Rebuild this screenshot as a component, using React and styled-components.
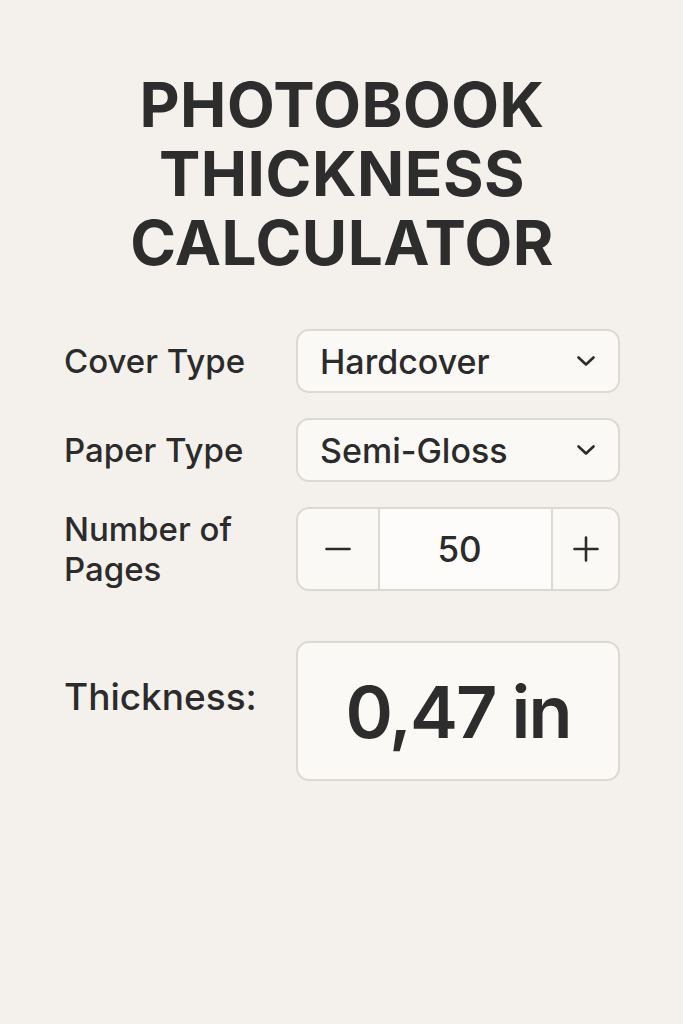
import React from 'react';
import styled, { createGlobalStyle } from 'styled-components';

const GlobalStyle = createGlobalStyle`
    html, body {
        margin: 0;
        background: #f4f1ec;
    }
    body {
        font-family: Inter, "Noto Sans", sans-serif;
        color: #2b2b2b;
    }
`

const Page = styled.div`
    width: 683px;
    min-height: 1024px;
    box-sizing: border-box;
    padding: 70px 63px 0 64px;
`

const Title = styled.h1`
    margin: 0 0 52px;
    text-align: center;
    font-size: 62px;
    line-height: 69px;
    font-weight: 700;
    letter-spacing: 0.5px;
    color: #2d2d2d;
`

const Form = styled.div`
    display: grid;
    grid-template-columns: 232px 324px;
    row-gap: 25px;
    align-items: center;
`

const Label = styled.label`
    font-size: 33px;
    line-height: 40px;
    font-weight: 500;
    color: #2b2b2b;
    padding-right: 30px;
`

const Box = styled.div`
    box-sizing: border-box;
    height: ${p => p.$h || 64}px;
    border: 2px solid #dcd8d2;
    border-radius: 13px;
    background: #fbf9f6;
    display: flex;
    align-items: center;
`

const SelectBox = styled(Box)`
    padding: 0 22px 0 22px;
    justify-content: space-between;
    font-size: 34px;
    font-weight: 500;
`

const Stepper = styled(Box)`
    overflow: hidden;
`

const StepButton = styled.div`
    width: ${p => p.$w}px;
    height: 100%;
    display: flex;
    align-items: center;
    justify-content: center;
`

const StepValue = styled.div`
    flex: 1;
    height: 100%;
    display: flex;
    align-items: center;
    justify-content: center;
    padding-right: 12px;
    border-left: 2px solid #dcd8d2;
    border-right: 2px solid #dcd8d2;
    background: #fdfcfa;
    font-size: 35px;
    font-weight: 500;
`

const ResultRow = styled.div`
    margin-top: 50px;
    display: grid;
    grid-template-columns: 232px 324px;
    align-items: center;
`

const ResultLabel = styled(Label)`
    margin-top: -28px;
    font-size: 37px;
    padding-right: 0;
    white-space: nowrap;
`

const ResultBox = styled(Box)`
    justify-content: center;
    font-size: 72px;
    font-weight: 600;
    letter-spacing: -2px;
    color: #2d2d2d;
`

const Chevron = () => (
    <svg width="20" height="12" viewBox="0 0 20 12" fill="none">
        <path d="M2.5 2.5l7.5 7 7.5-7" stroke="#2b2b2b" strokeWidth="2.6" strokeLinecap="round" strokeLinejoin="round" />
    </svg>
)

const Minus = () => (
    <svg width="26" height="26" viewBox="0 0 26 26">
        <path d="M1.5 13h23" stroke="#2b2b2b" strokeWidth="2.6" strokeLinecap="round" />
    </svg>
)

const Plus = () => (
    <svg width="26" height="26" viewBox="0 0 26 26">
        <path d="M1.5 13h23M13 1.5v23" stroke="#2b2b2b" strokeWidth="2.6" strokeLinecap="round" />
    </svg>
)

const App = () => {
    return (
        <Page>
            <GlobalStyle />
            <Title>PHOTOBOOK<br />THICKNESS<br />CALCULATOR</Title>
            <Form>
                <Label>Cover Type</Label>
                <SelectBox>
                    <span>Hardcover</span>
                    <Chevron />
                </SelectBox>
                <Label>Paper Type</Label>
                <SelectBox>
                    <span>Semi-Gloss</span>
                    <Chevron />
                </SelectBox>
                <Label>Number of Pages</Label>
                <Stepper $h={84}>
                    <StepButton $w={80}><Minus /></StepButton>
                    <StepValue>50</StepValue>
                    <StepButton $w={65}><Plus /></StepButton>
                </Stepper>
            </Form>
            <ResultRow>
                <ResultLabel>Thickness:</ResultLabel>
                <ResultBox $h={140}>0,47 in</ResultBox>
            </ResultRow>
        </Page>
    )
}

export default App
